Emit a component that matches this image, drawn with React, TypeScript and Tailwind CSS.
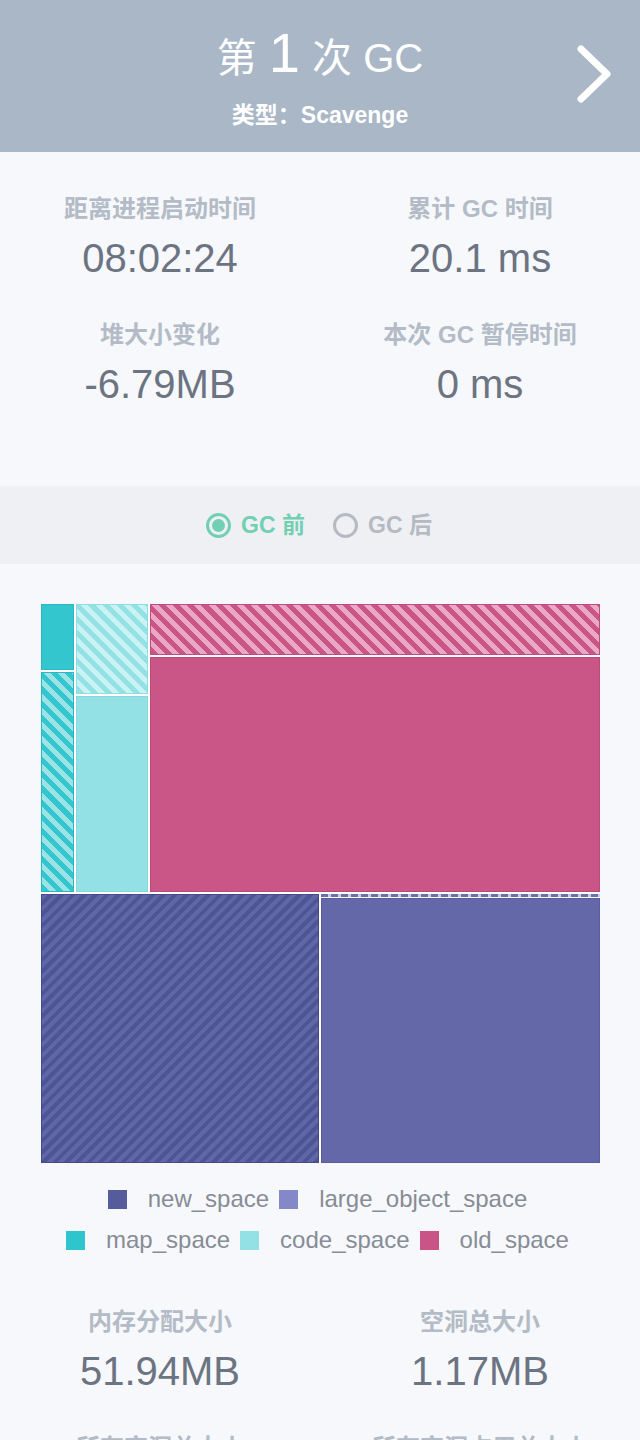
import { useState } from "react";

const font = "font-['Liberation_Sans','Noto_Sans_CJK_SC',sans-serif]";

const topStats = [
  { label: "距离进程启动时间", value: "08:02:24" },
  { label: "累计 GC 时间", value: "20.1 ms" },
  { label: "堆大小变化", value: "-6.79MB" },
  { label: "本次 GC 暂停时间", value: "0 ms" },
];

const bottomStats = [
  { label: "内存分配大小", value: "51.94MB" },
  { label: "空洞总大小", value: "1.17MB" },
  { label: "所有空洞总大小", value: "" },
  { label: "所有空洞占用总大小", value: "" },
];

const legendRows = [
  [
    { name: "new_space", color: "bg-[#565b9c]" },
    { name: "large_object_space", color: "bg-[#8388c8]" },
  ],
  [
    { name: "map_space", color: "bg-[#2fc5cf]" },
    { name: "code_space", color: "bg-[#93e1e4]" },
    { name: "old_space", color: "bg-[#c95586]" },
  ],
];

function StatGrid({ items }: { items: { label: string; value: string }[] }) {
  return (
    <div className="grid grid-cols-2 gap-y-[39px] text-center">
      {items.map((s) => (
        <div key={s.label} className="flex flex-col items-center gap-[11px]">
          <span className="text-[24px] leading-[28px] font-bold text-[#b3bbc6]">
            {s.label}
          </span>
          {s.value && (
            <span className="text-[40px] leading-[48px] text-[#6c7482]">
              {s.value}
            </span>
          )}
        </div>
      ))}
    </div>
  );
}

export default function App() {
  const [before, setBefore] = useState(true);

  return (
    <div className={`${font} bg-[#f6f8fb] min-h-screen w-[640px] overflow-hidden`}>
      {/* header */}
      <header className="relative h-[152px] bg-[#aab7c6] flex flex-col items-center text-white">
        <h1 className="mt-[27px] flex items-baseline gap-[12px] text-[40px] leading-[52px]">
          <span>第</span>
          <span className="text-[56px]">1</span>
          <span>次 GC</span>
        </h1>
        <p className="mt-[18px] text-[23px] leading-[26px] font-bold">类型：Scavenge</p>
        <svg
          className="absolute right-[26px] top-[43px]"
          width="42"
          height="62"
          viewBox="0 0 42 62"
          fill="none"
        >
          <polyline
            points="9,6 35,31 9,56"
            stroke="white"
            strokeWidth="7"
            strokeLinecap="round"
            strokeLinejoin="round"
          />
        </svg>
      </header>

      {/* summary */}
      <section className="pt-[43px] pb-[78px]">
        <StatGrid items={topStats} />
      </section>

      {/* before / after switch */}
      <div className="h-[78px] bg-[#eff0f4] flex items-center justify-center gap-[28px] text-[23px] font-bold pr-[2px]">
        <button
          type="button"
          onClick={() => setBefore(true)}
          className={`flex items-center gap-[10px] ${before ? "text-[#72cfb2]" : "text-[#b5b9c1]"}`}
        >
          <span
            className={`w-[25px] h-[25px] rounded-full border-[3px] flex items-center justify-center ${before ? "border-[#72cfb2]" : "border-[#b5b9c1]"}`}
          >
            {before && <span className="w-[13px] h-[13px] rounded-full bg-[#72cfb2]" />}
          </span>
          GC 前
        </button>
        <button
          type="button"
          onClick={() => setBefore(false)}
          className={`flex items-center gap-[10px] ${!before ? "text-[#72cfb2]" : "text-[#b5b9c1]"}`}
        >
          <span
            className={`w-[25px] h-[25px] rounded-full border-[3px] flex items-center justify-center ${!before ? "border-[#72cfb2]" : "border-[#b5b9c1]"}`}
          >
            {!before && <span className="w-[13px] h-[13px] rounded-full bg-[#72cfb2]" />}
          </span>
          GC 后
        </button>
      </div>

      {/* treemap */}
      <div className="mt-[40px] ml-[41px] w-[559px] h-[559px] flex flex-col gap-[2px] bg-white">
        <div className="h-[288px] flex gap-[2px]">
          <div className="w-[33px] flex flex-col gap-[2px]">
            <div className="h-[66px] bg-[#33c6cf] border border-[#2bb8c2]" />
            <div className="flex-1 border border-[#2bb8c2] bg-[image:repeating-linear-gradient(45deg,#33c6cf_0px,#33c6cf_5px,#9ce3e6_5px,#9ce3e6_10px)]" />
          </div>
          <div className="w-[72px] flex flex-col gap-[2px]">
            <div className="h-[90px] border border-[#8fdde0] bg-[image:repeating-linear-gradient(45deg,#93e1e4_0px,#93e1e4_5px,#c9f2f3_5px,#c9f2f3_10px)]" />
            <div className="flex-1 bg-[#93e1e4] border border-[#86d9dc]" />
          </div>
          <div className="flex-1 flex flex-col gap-[2px]">
            <div className="h-[51px] border border-[#c04c7d] bg-[image:repeating-linear-gradient(45deg,#c95686_0px,#c95686_5px,#eba7c6_5px,#eba7c6_10px)]" />
            <div className="flex-1 bg-[#c95686] border border-[#bd4a7b]" />
          </div>
        </div>
        <div className="flex-1 flex gap-[2px]">
          <div className="w-[278px] border border-[#444a8a] bg-[image:repeating-linear-gradient(-45deg,#4e5494_0px,#4e5494_4px,#6067a8_4px,#6067a8_8px)]" />
          <div className="flex-1 flex flex-col gap-[1px]">
            <div className="h-[3px] bg-[image:repeating-linear-gradient(90deg,#6a70a8_0px,#6a70a8_7px,#c9cde6_7px,#c9cde6_10px)]" />
            <div className="flex-1 bg-[#6568a8] border border-[#5a5e9e]" />
          </div>
        </div>
      </div>

      {/* legend */}
      <div className="mt-[22px] flex flex-col items-center gap-[13px] pr-[5px]">
        {legendRows.map((row, i) => (
          <div key={i} className="flex items-center gap-[10px]">
            {row.map((l) => (
              <div key={l.name} className="flex items-center gap-[21px]">
                <span className={`w-[19px] h-[19px] ${l.color}`} />
                <span className="text-[24px] leading-[28px] text-[#878c96]">{l.name}</span>
              </div>
            ))}
          </div>
        ))}
      </div>

      {/* allocation stats */}
      <section className="pt-[54px] pb-[40px]">
        <StatGrid items={bottomStats} />
      </section>
    </div>
  );
}
